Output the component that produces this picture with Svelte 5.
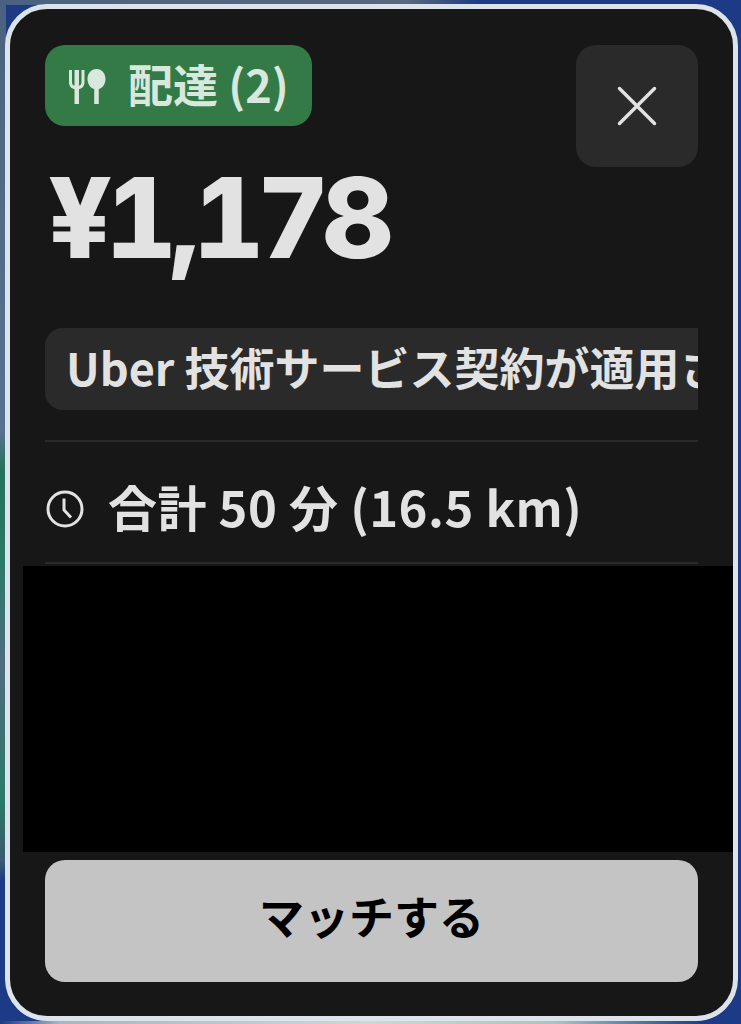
<script>
    let count = 2;
    let price = '¥1,178';
    let notice = 'Uber 技術サービス契約が適用されます';
    let trip = '合計 50 分 (16.5 km)';
</script>

<div class="page">
    <div class="card">
        <div class="top">
            <div class="left">
                <div class="badge">
                    <svg class="food" viewBox="0 0 40 40" width="40" height="40">
                        <path d="M3 4v12c0 4 2 6.500 5.500 7.200V38h4.500V23.200c3.500-.7 5.500-3.200 5.500-7.200V4h-3v12c0 2-.6 3.200-2.500 3.800V4h-4.500v15.800C6.600 19.200 6 18 6 16V4z" fill="currentColor"/>
                        <path d="M30.500 3c-5.500 0-9 4.500-9 10 0 5 2.800 9 6.700 10v15h4.600V23c3.900-1 6.700-5 6.700-10 0-5.500-3.500-10-9-10z" fill="currentColor"/>
                    </svg>
                    <span>配達 ({count})</span>
                </div>
                <div class="price">{price}</div>
            </div>
            <button class="close" aria-label="閉じる">
                <svg viewBox="0 0 40 40" width="40" height="40">
                    <path d="M2.500 2.500l35 35M37.500 2.500l-35 35" stroke="currentColor" stroke-width="3.500" stroke-linecap="round" fill="none"/>
                </svg>
            </button>
        </div>

        <div class="notice"><span>{notice}</span></div>

        <div class="row">
            <svg class="clock" viewBox="0 0 40 40" width="40" height="40">
                <circle cx="20" cy="20" r="17" stroke="currentColor" stroke-width="3" fill="none"/>
                <path d="M19 9.500V21l7 7.500" stroke="currentColor" stroke-width="3" fill="none"/>
            </svg>
            <span>{trip}</span>
        </div>

        <div class="hidden-block"></div>

        <button class="match">マッチする</button>
    </div>
</div>

<style>
    :global(body) {
        margin: 0;
        background: #1c3a85;
    }

    /* the map behind the card only shows in thin strips along the edges */
    .page {
        width: 741px;
        height: 1024px;
        box-sizing: border-box;
        padding: 4px 3px 3px 5px;
        background:
            linear-gradient(90deg, #1c3a85 0, #a9b6bd 8%, #cfd6d8 50%, #a9c4c0 75%, #1c3a85 95%) bottom / 100% 3px no-repeat,
            linear-gradient(180deg, #4a6280 0, #5a7090 42%, #24725c 46%, #2a7a68 55%, #4f6c80 65%, #2a7a68 78%, #3a5c70 84%, #1c3a85 86%) left / 6px 100% no-repeat,
            linear-gradient(90deg, #4a6280 0, #56687e 55%, #1c3a85 65%) top / 100% 5px no-repeat,
            #1c3a85;
    }

    .card {
        height: 100%;
        box-sizing: border-box;
        border: 5px solid #dde3ea;
        border-radius: 42px;
        background: #171717;
        padding: 36px 35px 0 35px;
        font-family: "Noto Sans CJK JP", "Noto Sans", sans-serif;
        color: #e2e2e2;
    }

    .top {
        display: flex;
        justify-content: space-between;
        align-items: flex-start;
    }

    .badge {
        display: inline-flex;
        align-items: center;
        gap: 22px;
        height: 81px;
        width: 267px;
        box-sizing: border-box;
        padding: 0 0 5px 21px;
        border-radius: 20px;
        background: #337a47;
        color: #d9e8dc;
        font-size: 45px;
        font-weight: 700;
    }

    .food {
        width: 40px;
        height: 40px;
        margin-top: 5px;
    }

    .price {
        margin: 31px 0 0 3px;
        height: 134px;
        line-height: 122px;
        font-family: Inter, sans-serif;
        font-feature-settings: "tnum";
        font-size: 111px;
        font-weight: 800;
        letter-spacing: -7px;
        color: #e2e2e2;
    }

    .close {
        width: 122px;
        height: 122px;
        border: none;
        border-radius: 20px;
        background: #2a2a2a;
        color: #e2e2e2;
        display: flex;
        align-items: center;
        justify-content: center;
        padding: 0;
    }

    .notice {
        margin-top: 37px;
        height: 82px;
        border-radius: 18px 0 0 18px;
        background: #2a2a2a;
        padding-left: 21px;
        font-size: 45px;
        font-weight: 700;
        line-height: 78px;
        white-space: nowrap;
        overflow: hidden;
    }

    .row {
        margin-top: 30px;
        height: 124px;
        box-sizing: border-box;
        padding-top: 6px;
        border-top: 2px solid #2a2a2a;
        border-bottom: 2px solid #2a2a2a;
        display: flex;
        align-items: center;
        gap: 23px;
        font-size: 49px;
        font-weight: 700;
        letter-spacing: 0.5px;
    }

    .clock {
        margin-top: 8px;
    }

    .hidden-block {
        height: 286px;
        margin: 2px -35px 0 -22px;
        background: #000;
    }

    .match {
        display: block;
        width: 100%;
        height: 122px;
        margin-top: 8px;
        padding: 0 0 12px;
        border: none;
        border-radius: 20px;
        background: #c4c4c4;
        color: #000;
        font-family: inherit;
        font-size: 45px;
        font-weight: 700;
    }
</style>
